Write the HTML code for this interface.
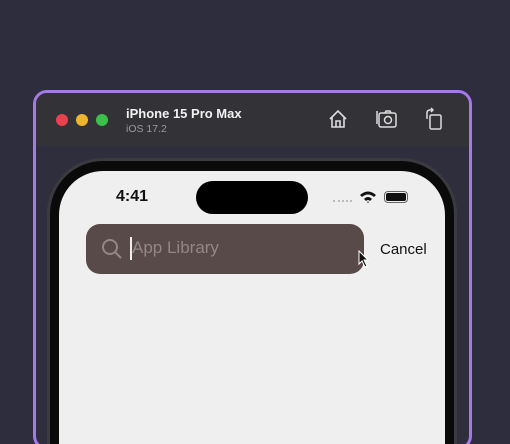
<!DOCTYPE html>
<html><head><style>
*{margin:0;padding:0;box-sizing:border-box}
html,body{width:510px;height:444px;overflow:hidden}
body{background:#2e2d3d;position:relative;font-family:"Liberation Sans",sans-serif}
.win{position:absolute;left:33px;top:90px;width:439px;height:360px;border:3px solid #a679e6;border-radius:14px;background:#2f2e3c;overflow:hidden}
.title{position:absolute;left:0;top:0;right:0;height:53px;background:#333237}
.dot{position:absolute;top:21px;width:12px;height:12px;border-radius:50%}
.t1{position:absolute;left:90px;top:13px;color:#f2f2f2;font-weight:bold;font-size:13px}
.t2{position:absolute;left:90px;top:30px;color:#9a9a9e;font-size:10.5px}
.bez{position:absolute;left:11px;top:65px;width:410px;height:400px;border-radius:56px;background:#0a0a0a;border:3px solid #3a3a40}
.scr{position:absolute;left:23px;top:78px;width:386px;height:400px;border-radius:44px;background:#efefef}
.island{position:absolute;left:160px;top:88px;width:112px;height:33px;border-radius:17px;background:#000}
.time{position:absolute;left:80px;top:95px;font-size:16px;font-weight:bold;color:#111}
.search{position:absolute;left:50px;top:131px;width:278px;height:50px;border-radius:14px;background:#574a48}
.ph{position:absolute;left:46px;top:14px;font-size:17px;color:#938785}
.caret{position:absolute;left:44px;top:13px;width:2px;height:23px;background:#eee}
.cancel{position:absolute;left:344px;top:148px;font-size:15px;color:#111}
</style></head><body>
<div class="win">
<div class="title">
<div class="dot" style="left:20px;background:#e8424f"></div>
<div class="dot" style="left:40px;background:#f0b52f"></div>
<div class="dot" style="left:60px;background:#3bc04b"></div>
<div class="t1">iPhone 15 Pro Max</div>
<div class="t2">iOS 17.2</div>
<svg style="position:absolute;left:291px;top:15px" width="22" height="22" viewBox="0 0 22 22" fill="none" stroke="#ddd" stroke-width="1.6"><path d="M3 11 L11 3 L19 11 M5 9 V19 H17 V9 M9 19 V13 H13 V19"/></svg>
<svg style="position:absolute;left:340px;top:15px" width="22" height="22" viewBox="0 0 22 22" fill="none" stroke="#ddd" stroke-width="1.5"><rect x="3" y="5" width="17" height="14" rx="2"/><path d="M1 3 V16"/><circle cx="12" cy="12" r="3.5"/><path d="M9 5 L10 3 H14 L15 5"/></svg>
<svg style="position:absolute;left:388px;top:14px" width="20" height="24" viewBox="0 0 20 24" fill="none" stroke="#ddd" stroke-width="1.5"><rect x="6" y="8" width="11" height="14" rx="1.5"/><path d="M3 12 V6 Q3 3 6 3 H9 M7 1 L9 3 L7 5"/></svg>
</div>
<div class="bez"></div>
<div class="scr"></div>
<div class="island"></div>
<div class="time">4:41</div>
<div style="position:absolute;left:297px;top:107px;width:19px;height:2px;border-top:2px dotted #bbb"></div>
<svg style="position:absolute;left:323px;top:97px" width="18" height="14" viewBox="0 0 18 14"><path d="M1 5 Q9 -2 17 5 L15 7 Q9 2 3 7Z M5 9 Q9 5 13 9 L11 11 Q9 9 7 11Z M8 12 L9 13 L10 12 Q9 11 8 12Z" fill="#111"/></svg>
<div style="position:absolute;left:348px;top:98px;width:24px;height:12px;border:1.5px solid #666;border-radius:4px;padding:1px"><div style="width:100%;height:100%;background:#111;border-radius:2px"></div></div>
<div class="search">
<svg style="position:absolute;left:15px;top:14px" width="22" height="22" viewBox="0 0 22 22" fill="none" stroke="#948886" stroke-width="2"><circle cx="9" cy="9" r="7"/><path d="M14 14 L20 20"/></svg>
<div class="caret"></div>
<div class="ph">App Library</div>
</div>
<svg style="position:absolute;left:322px;top:157px" width="12" height="18" viewBox="0 0 12 18"><path d="M1 1 V14 L4 11 L7 17 L9 16 L6 10 H10Z" fill="#111" stroke="#fff" stroke-width="1"/></svg>
<div class="cancel">Cancel</div>
</div>
</body></html>
